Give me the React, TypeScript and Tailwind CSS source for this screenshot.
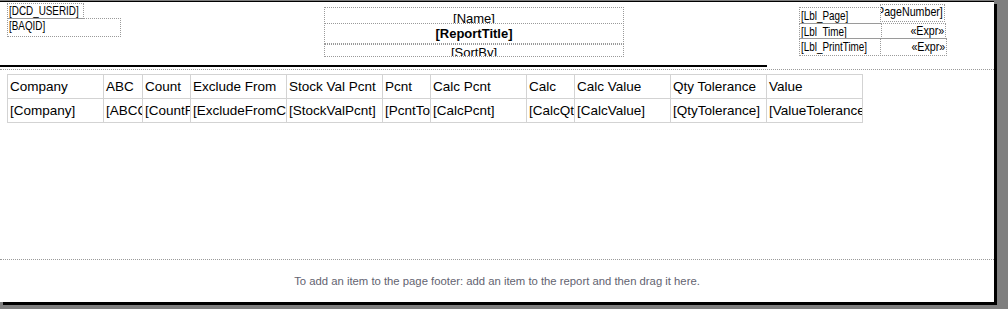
import React from "react";

type Field = {
  text: string;
  x: number;
  y: number;
  w: number;
  h: number;
  align?: "left" | "center" | "right";
  bold?: boolean;
  pad?: string;
  wide?: boolean;
};

const fields: Field[] = [
  { text: "[DCD_USERID]", x: 7, y: 1, w: 77, h: 16, pad: "pt-0" },
  { text: "[BAQID]", x: 7, y: 16, w: 114, h: 19, pad: "pt-0" },
  { text: "[Name]", x: 324, y: 5, w: 300, h: 17, align: "center", pad: "pt-[4px]" },
  { text: "[ReportTitle]", x: 324, y: 21, w: 300, h: 21, align: "center", bold: true, pad: "pt-[3px]" },
  { text: "[SortBy]", x: 324, y: 42, w: 300, h: 13, align: "center", pad: "pt-[1px]" },
  { text: "[Lbl_Page]", x: 799, y: 5, w: 82, h: 17, pad: "pt-[1px]" },
  { text: "[PageNumber]", x: 880, y: 2, w: 65, h: 18, align: "right", pad: "pt-0", wide: true },
  { text: "[Lbl_Time]", x: 799, y: 21, w: 83, h: 16, pad: "pt-[1px]" },
  { text: "«Expr»", x: 881, y: 21, w: 65, h: 16, align: "right", pad: "pt-0", wide: true },
  { text: "[Lbl_PrintTime]", x: 799, y: 36, w: 82, h: 18, pad: "pt-[1px]" },
  { text: "«Expr»", x: 880, y: 36, w: 67, h: 18, align: "right", pad: "pt-[1px]", wide: true },
];

const columns = [
  { head: "Company", cell: "[Company]", w: 96 },
  { head: "ABC", cell: "[ABCCode]", w: 39 },
  { head: "Count", cell: "[CountFreq]", w: 48 },
  { head: "Exclude From", cell: "[ExcludeFromCC]", w: 96 },
  { head: "Stock Val Pcnt", cell: "[StockValPcnt]", w: 96 },
  { head: "Pcnt", cell: "[PcntTolerance]", w: 48 },
  { head: "Calc Pcnt", cell: "[CalcPcnt]", w: 96 },
  { head: "Calc", cell: "[CalcQty]", w: 48 },
  { head: "Calc Value", cell: "[CalcValue]", w: 96 },
  { head: "Qty Tolerance", cell: "[QtyTolerance]", w: 96 },
  { head: "Value", cell: "[ValueTolerance]", w: 96 },
];

function FieldBox({ f }: { f: Field }) {
  const center = f.align === "center";
  const right = f.align === "right";
  return (
    <div
      className={`absolute flex overflow-hidden border border-dotted border-[#9a9a9a] px-[1px] ${
        center ? "justify-center" : right ? "justify-end" : "justify-start"
      } ${f.pad ?? ""}`}
      style={{ left: f.x, top: f.y, width: f.w, height: f.h }}
    >
      {center ? (
        <span
          className={`shrink-0 whitespace-nowrap text-[13px] leading-[14px] text-black ${f.bold ? "font-bold" : ""}`}
        >
          {f.text}
        </span>
      ) : (
        <span
          className={`inline-block shrink-0 whitespace-nowrap text-[13px] leading-[14px] text-black ${
            right ? "origin-right" : "origin-left"
          } ${f.wide ? "scale-x-[0.82]" : "scale-x-[0.76]"}`}
        >
          {f.text}
        </span>
      )}
    </div>
  );
}

export default function App() {
  return (
    <div className="h-[309px] w-[1008px] overflow-hidden bg-[#7f7f7f] font-['Liberation_Sans',Arial,sans-serif]">
      <div className="mt-[1px] flex h-[301px] w-[994px] flex-col border-t border-black bg-white shadow-[3px_3px_0_#000]">
        {/* page header */}
        <div className="relative h-[68px] shrink-0 border-b border-dotted border-[#9a9a9a]">
          {fields.map((f, i) => (
            <FieldBox key={i} f={f} />
          ))}
          <div className="absolute left-0 top-[63px] h-[2px] w-[767px] bg-black" />
        </div>

        {/* detail */}
        <div className="h-[190px] shrink-0 border-b border-dotted border-[#9a9a9a] pl-[7px] pt-[4px]">
          <div className="flex w-max flex-col border-l border-t border-[#d3d3d3] text-[13.5px] text-black">
            <div className="flex">
              {columns.map((c) => (
                <div
                  key={c.head}
                  className="h-[24px] overflow-hidden whitespace-nowrap border-b border-r border-[#d3d3d3] pl-[2px] leading-[23px]"
                  style={{ width: c.w }}
                >
                  {c.head}
                </div>
              ))}
            </div>
            <div className="flex">
              {columns.map((c) => (
                <div
                  key={c.cell}
                  className="h-[24px] overflow-hidden whitespace-nowrap border-b border-r border-[#d3d3d3] pl-[2px] leading-[23px]"
                  style={{ width: c.w }}
                >
                  {c.cell}
                </div>
              ))}
            </div>
          </div>
        </div>

        {/* page footer */}
        <div className="flex flex-1 items-center justify-center">
          <span className="text-[11.3px] text-[#636370]">
            To add an item to the page footer: add an item to the report and then drag it here.
          </span>
        </div>
      </div>
    </div>
  );
}
